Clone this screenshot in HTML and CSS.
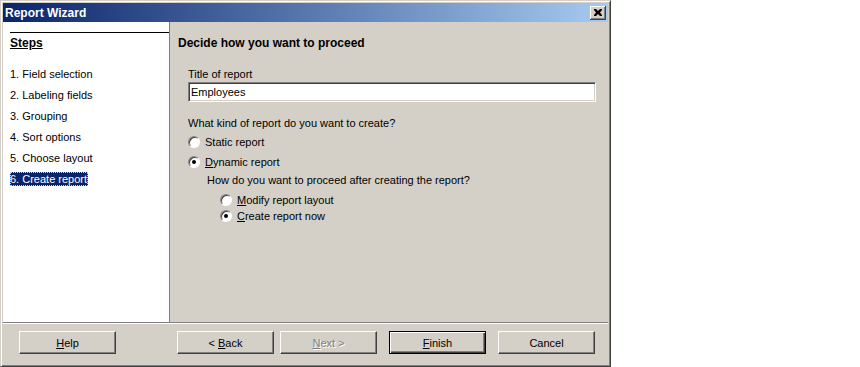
FILE: index.html
```html
<!DOCTYPE html>
<html lang="en">
<head>
    <meta charset="UTF-8">
    <title>Report Wizard</title>
    <link rel="stylesheet" href="styles.css">
</head>
<body>
<div class="window">
    <div class="titlebar">
        <span class="caption">Report Wizard</span>
        <span class="close">
            <svg width="8" height="7" viewBox="0 0 8 7"><path d="M0 0h2l2 2 2-2h2v1l-2 2.5 2 2.5v1h-2l-2-2-2 2h-2v-1l2-2.5-2-2.5z" fill="#000"/></svg>
        </span>
    </div>
    <div class="main">
        <div class="steps">
            <div class="steps-head"><u>Steps</u></div>
            <ul class="step-list">
                <li>1. Field selection</li>
                <li>2. Labeling fields</li>
                <li>3. Grouping</li>
                <li>4. Sort options</li>
                <li>5. Choose layout</li>
                <li><span class="current">6. Create report</span></li>
            </ul>
        </div>
        <div class="page">
            <div class="page-title">Decide how you want to proceed</div>
            <div class="form">
                <div class="label">Title of report</div>
                <div class="field">Employees</div>
                <div class="label question">What kind of report do you want to create?</div>
                <div class="option first"><span class="radio"></span>Static report</div>
                <div class="option second"><span class="radio checked"></span><u>D</u>ynamic report</div>
                <div class="label sub">How do you want to proceed after creating the report?</div>
                <div class="option nested"><span class="radio"></span><u>M</u>odify report layout</div>
                <div class="option nested tight"><span class="radio checked"></span><u>C</u>reate report now</div>
            </div>
        </div>
    </div>
    <div class="footer">
        <button class="btn help"><u>H</u>elp</button>
        <button class="btn back">&lt; <u>B</u>ack</button>
        <button class="btn next" disabled><u>N</u>ext &gt;</button>
        <button class="btn finish default"><u>F</u>inish</button>
        <button class="btn cancel">Cancel</button>
    </div>
</div>
</body>
</html>
```

FILE: styles.css
```css
body{
    margin:0;
    background:#fff;
    font-family:"Liberation Sans", Arial, sans-serif;
    font-size:11px;
    color:#000;
}
.window{
    width:611px;
    height:367px;
    box-sizing:border-box;
    background:#d4d0c8;
    border:1px solid;
    border-color:#d4d0c8 #404040 #404040 #d4d0c8;
    box-shadow:inset 1px 1px #fff, inset -1px -1px #808080;
    padding:2px;
    display:flex;
    flex-direction:column;
}
.titlebar{
    height:19px;
    display:flex;
    align-items:center;
    justify-content:space-between;
    padding:0 2px 0 2px;
    background:linear-gradient(to right,#0a246a,#a6caf0);
    color:#fff;
    font-weight:bold;
    font-size:12px;
}
.close{
    width:16px;
    height:14px;
    box-sizing:border-box;
    background:#d4d0c8;
    display:flex;
    align-items:center;
    justify-content:center;
    box-shadow:inset -1px -1px #404040, inset 1px 1px #fff, inset -2px -2px #808080;
}
.main{
    display:flex;
    height:300px;
    border-bottom:1px solid #808080;
    box-shadow:0 1px #fff;
}
.steps{
    width:167px;
    box-sizing:border-box;
    background:#fff;
    border-right:1px solid #808080;
    padding-left:7px;
}
.steps-head{
    margin-top:10px;
    border-top:1px solid #000;
    padding-top:3px;
    font-weight:bold;
    font-size:12px;
    line-height:15px;
}
.step-list{
    list-style:none;
    margin:16px 0 0;
    padding:0;
}
.step-list li{
    line-height:15px;
    margin-bottom:6px;
}
.current{
    background:#0a246a;
    color:#fff;
    outline:1px dotted #d4d0c8;
    outline-offset:-1px;
    padding:1px 1px 1px 0;
}
.page{
    flex:1;
    padding:14px 12px 0 8px;
}
.page-title{
    font-weight:bold;
    font-size:12px;
    line-height:15px;
}
.form{
    padding-left:10px;
    margin-top:16px;
}
.label{
    line-height:15px;
}
.field{
    height:20px;
    box-sizing:border-box;
    background:#fff;
    border:1px solid;
    border-color:#808080 #fff #fff #808080;
    box-shadow:inset 1px 1px #404040, inset -1px -1px #d4d0c8;
    padding:2px 2px;
    line-height:14px;
}
.question{
    margin-top:14px;
}
.option{
    display:flex;
    align-items:center;
    height:15px;
    margin-top:4px;
}
.option.first{
    margin-top:3px;
}
.option.second{
    margin-top:5px;
}
.sub{
    margin-top:4px;
    padding-left:19px;
}
.nested{
    padding-left:32px;
    margin-top:4px;
}
.tight{
    margin-top:1px;
}
.radio{
    width:12px;
    height:12px;
    box-sizing:border-box;
    border-radius:50%;
    background:#fff;
    border:1px solid;
    border-color:#808080 #fff #fff #808080;
    box-shadow:inset 1px 1px #404040;
    margin-right:5px;
    position:relative;
}
.radio.checked::after{
    content:"";
    position:absolute;
    left:3px;
    top:3px;
    width:4px;
    height:4px;
    border-radius:50%;
    background:#000;
}
.footer{
    display:flex;
    padding:8px 0 0 16px;
}
.btn{
    width:97px;
    height:23px;
    box-sizing:border-box;
    font-family:inherit;
    font-size:11px;
    color:#000;
    background:#d4d0c8;
    border:1px solid;
    border-color:#fff #404040 #404040 #fff;
    box-shadow:inset -1px -1px #808080;
    padding:0;
}
.back{
    margin-left:61px;
}
.next{
    margin-left:6px;
    color:#808080;
    text-shadow:1px 1px #fff;
}
.finish{
    margin-left:12px;
}
.cancel{
    margin-left:12px;
}
.default{
    border:1px solid #000;
    box-shadow:inset 1px 1px #fff, inset -1px -1px #404040, inset -2px -2px #808080;
}
```
